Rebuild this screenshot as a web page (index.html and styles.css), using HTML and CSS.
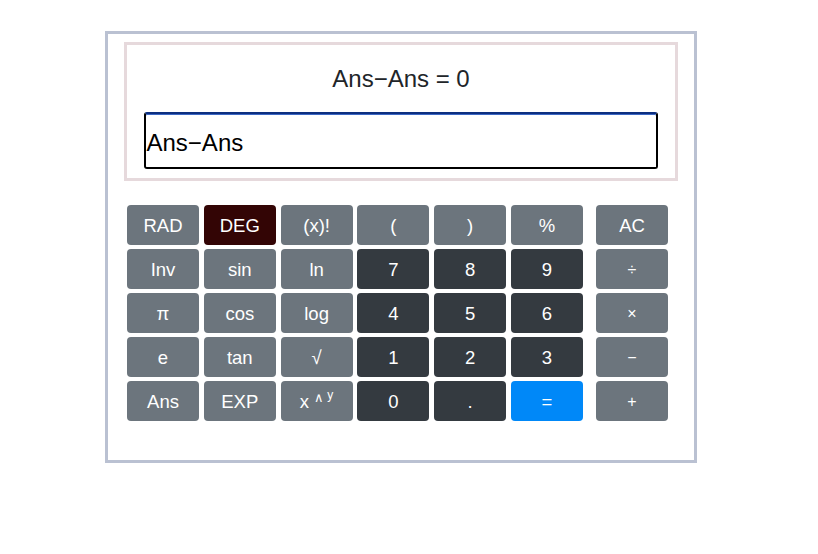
FILE: index.html
```html
<!DOCTYPE html>
<html>
<head>
<meta charset="utf-8">
<link rel="stylesheet" href="styles.css">
</head>
<body>
<div class="calc">
  <div class="screen">
    <div class="result">Ans−Ans = 0</div>
    <div class="input">Ans−Ans</div>
  </div>
  <div class="keys">
    <div class="grid">
      <button class="btn gray">RAD</button>
      <button class="btn deg">DEG</button>
      <button class="btn gray">(x)!</button>
      <button class="btn gray">(</button>
      <button class="btn gray">)</button>
      <button class="btn gray">%</button>

      <button class="btn gray">Inv</button>
      <button class="btn gray">sin</button>
      <button class="btn gray">ln</button>
      <button class="btn dark">7</button>
      <button class="btn dark">8</button>
      <button class="btn dark">9</button>

      <button class="btn gray">π</button>
      <button class="btn gray">cos</button>
      <button class="btn gray">log</button>
      <button class="btn dark">4</button>
      <button class="btn dark">5</button>
      <button class="btn dark">6</button>

      <button class="btn gray">e</button>
      <button class="btn gray">tan</button>
      <button class="btn gray">√</button>
      <button class="btn dark">1</button>
      <button class="btn dark">2</button>
      <button class="btn dark">3</button>

      <button class="btn gray">Ans</button>
      <button class="btn gray">EXP</button>
      <button class="btn gray">x <span class="pow">∧</span> <span class="powy">y</span></button>
      <button class="btn dark">0</button>
      <button class="btn dark">.</button>
      <button class="btn blue">=</button>
    </div>
    <div class="ops">
      <button class="btn gray">AC</button>
      <button class="btn gray op">÷</button>
      <button class="btn gray op">×</button>
      <button class="btn gray op">−</button>
      <button class="btn gray op">+</button>
    </div>
  </div>
</div>
</body>
</html>
```
FILE: styles.css
```css
html, body {
  margin: 0;
  padding: 0;
  background: #fff;
}
body {
  font-family: "Liberation Sans", Arial, sans-serif;
  padding: 31px 0 0 105px;
}
.calc {
  border: 3px solid #bac1d2;
  padding: 8px 16px 0 16px;
  box-sizing: content-box;
  width: 554px;
  height: 418px;
}
.screen {
  width: 548px;
  height: 133px;
  border: 3px solid #e6d9dc;
  display: flex;
  flex-direction: column;
  align-items: center;
}
.result {
  margin-top: 19px;
  font-size: 24px;
  line-height: 30px;
  color: #212529;
  text-align: center;
  width: 100%;
}
.input {
  margin-top: 18px;
  width: 509px;
  height: 49px;
  padding-top: 4px;
  margin-left: -1px;
  border: 2px solid #000;
  border-top-color: #0d2f80;
  box-shadow: inset 0 1px 0 #3d68c4;
  border-radius: 3px;
  font-size: 24px;
  line-height: 49px;
  padding-left: 1px;
  color: #000;
  box-sizing: content-box;
}
.keys {
  display: flex;
  margin-top: 24px;
  padding-left: 3px;
}
.grid {
  display: grid;
  grid-template-columns: repeat(6, 72px);
  grid-auto-rows: 40px;
  column-gap: 4.8px;
  row-gap: 4px;
}
.ops {
  margin-left: 13px;
  display: grid;
  grid-template-columns: 72px;
  grid-auto-rows: 40px;
  row-gap: 4px;
}
.btn {
  border: 0;
  border-radius: 4px;
  color: #fff;
  font-family: "Liberation Sans", Arial, sans-serif;
  font-size: 18.5px;
  padding: 1px 0 0 0;
  margin: 0;
  line-height: 39px;
  text-align: center;
}
.gray { background: #6c757d; }
.dark { background: #343a40; }
.deg { background: #330505; }
.blue { background: #0088f8; }
.op { font-size: 16px; }
.pow {
  font-size: 13px;
  position: relative;
  top: -6px;
}
.powy {
  font-size: 12px;
  position: relative;
  top: -9px;
  margin-left: -2px;
}
```
